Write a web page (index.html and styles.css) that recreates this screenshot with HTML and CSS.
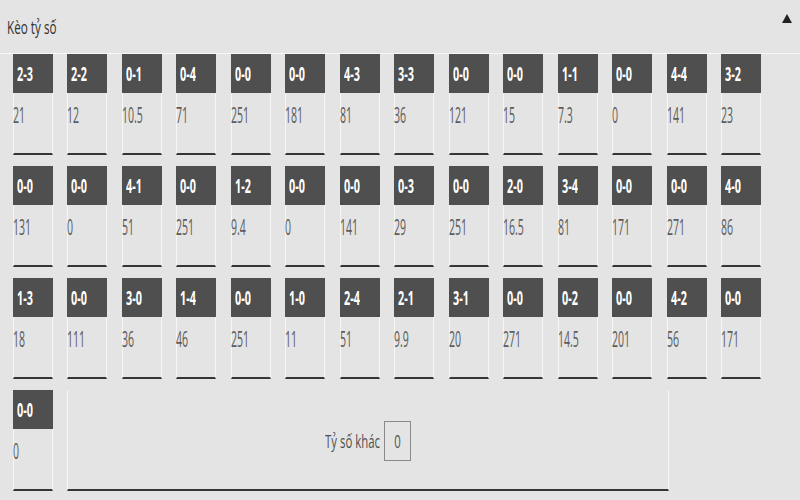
FILE: index.html
```html
<!DOCTYPE html>
<html lang="vi">
<head>
<meta charset="utf-8">
<title>Kèo tỷ số</title>
<link rel="stylesheet" href="styles.css">
</head>
<body>
<section class="panel">
  <header class="panel-header">
    <h2 class="panel-title"><span class="squeeze">Kèo tỷ số</span></h2>
    <span class="toggle" aria-label="Thu gọn"></span>
  </header>
  <div class="grid">
    <div class="cell"><div class="score"><span class="squeeze">2-3</span></div><div class="odd"><span class="squeeze">21</span></div></div>
    <div class="cell"><div class="score"><span class="squeeze">2-2</span></div><div class="odd"><span class="squeeze">12</span></div></div>
    <div class="cell"><div class="score"><span class="squeeze">0-1</span></div><div class="odd"><span class="squeeze">10.5</span></div></div>
    <div class="cell"><div class="score"><span class="squeeze">0-4</span></div><div class="odd"><span class="squeeze">71</span></div></div>
    <div class="cell"><div class="score"><span class="squeeze">0-0</span></div><div class="odd"><span class="squeeze">251</span></div></div>
    <div class="cell"><div class="score"><span class="squeeze">0-0</span></div><div class="odd"><span class="squeeze">181</span></div></div>
    <div class="cell"><div class="score"><span class="squeeze">4-3</span></div><div class="odd"><span class="squeeze">81</span></div></div>
    <div class="cell"><div class="score"><span class="squeeze">3-3</span></div><div class="odd"><span class="squeeze">36</span></div></div>
    <div class="cell"><div class="score"><span class="squeeze">0-0</span></div><div class="odd"><span class="squeeze">121</span></div></div>
    <div class="cell"><div class="score"><span class="squeeze">0-0</span></div><div class="odd"><span class="squeeze">15</span></div></div>
    <div class="cell"><div class="score"><span class="squeeze">1-1</span></div><div class="odd"><span class="squeeze">7.3</span></div></div>
    <div class="cell"><div class="score"><span class="squeeze">0-0</span></div><div class="odd"><span class="squeeze">0</span></div></div>
    <div class="cell"><div class="score"><span class="squeeze">4-4</span></div><div class="odd"><span class="squeeze">141</span></div></div>
    <div class="cell"><div class="score"><span class="squeeze">3-2</span></div><div class="odd"><span class="squeeze">23</span></div></div>

    <div class="cell"><div class="score"><span class="squeeze">0-0</span></div><div class="odd"><span class="squeeze">131</span></div></div>
    <div class="cell"><div class="score"><span class="squeeze">0-0</span></div><div class="odd"><span class="squeeze">0</span></div></div>
    <div class="cell"><div class="score"><span class="squeeze">4-1</span></div><div class="odd"><span class="squeeze">51</span></div></div>
    <div class="cell"><div class="score"><span class="squeeze">0-0</span></div><div class="odd"><span class="squeeze">251</span></div></div>
    <div class="cell"><div class="score"><span class="squeeze">1-2</span></div><div class="odd"><span class="squeeze">9.4</span></div></div>
    <div class="cell"><div class="score"><span class="squeeze">0-0</span></div><div class="odd"><span class="squeeze">0</span></div></div>
    <div class="cell"><div class="score"><span class="squeeze">0-0</span></div><div class="odd"><span class="squeeze">141</span></div></div>
    <div class="cell"><div class="score"><span class="squeeze">0-3</span></div><div class="odd"><span class="squeeze">29</span></div></div>
    <div class="cell"><div class="score"><span class="squeeze">0-0</span></div><div class="odd"><span class="squeeze">251</span></div></div>
    <div class="cell"><div class="score"><span class="squeeze">2-0</span></div><div class="odd"><span class="squeeze">16.5</span></div></div>
    <div class="cell"><div class="score"><span class="squeeze">3-4</span></div><div class="odd"><span class="squeeze">81</span></div></div>
    <div class="cell"><div class="score"><span class="squeeze">0-0</span></div><div class="odd"><span class="squeeze">171</span></div></div>
    <div class="cell"><div class="score"><span class="squeeze">0-0</span></div><div class="odd"><span class="squeeze">271</span></div></div>
    <div class="cell"><div class="score"><span class="squeeze">4-0</span></div><div class="odd"><span class="squeeze">86</span></div></div>

    <div class="cell"><div class="score"><span class="squeeze">1-3</span></div><div class="odd"><span class="squeeze">18</span></div></div>
    <div class="cell"><div class="score"><span class="squeeze">0-0</span></div><div class="odd"><span class="squeeze">111</span></div></div>
    <div class="cell"><div class="score"><span class="squeeze">3-0</span></div><div class="odd"><span class="squeeze">36</span></div></div>
    <div class="cell"><div class="score"><span class="squeeze">1-4</span></div><div class="odd"><span class="squeeze">46</span></div></div>
    <div class="cell"><div class="score"><span class="squeeze">0-0</span></div><div class="odd"><span class="squeeze">251</span></div></div>
    <div class="cell"><div class="score"><span class="squeeze">1-0</span></div><div class="odd"><span class="squeeze">11</span></div></div>
    <div class="cell"><div class="score"><span class="squeeze">2-4</span></div><div class="odd"><span class="squeeze">51</span></div></div>
    <div class="cell"><div class="score"><span class="squeeze">2-1</span></div><div class="odd"><span class="squeeze">9.9</span></div></div>
    <div class="cell"><div class="score"><span class="squeeze">3-1</span></div><div class="odd"><span class="squeeze">20</span></div></div>
    <div class="cell"><div class="score"><span class="squeeze">0-0</span></div><div class="odd"><span class="squeeze">271</span></div></div>
    <div class="cell"><div class="score"><span class="squeeze">0-2</span></div><div class="odd"><span class="squeeze">14.5</span></div></div>
    <div class="cell"><div class="score"><span class="squeeze">0-0</span></div><div class="odd"><span class="squeeze">201</span></div></div>
    <div class="cell"><div class="score"><span class="squeeze">4-2</span></div><div class="odd"><span class="squeeze">56</span></div></div>
    <div class="cell"><div class="score"><span class="squeeze">0-0</span></div><div class="odd"><span class="squeeze">171</span></div></div>

    <div class="cell"><div class="score"><span class="squeeze">0-0</span></div><div class="odd"><span class="squeeze">0</span></div></div>
    <div class="other">
      <label class="other-label"><span class="squeeze">Tỷ số khác</span></label>
      <div class="other-box"><span class="squeeze">0</span></div>
    </div>
  </div>
</section>
</body>
</html>
```

FILE: styles.css
```css
html, body {
  margin: 0;
  padding: 0;
  background: #e4e4e4;
}

body {
  width: 800px;
  height: 500px;
  overflow: hidden;
  font-family: "Open Sans", "Noto Sans", sans-serif;
  color: #555;
}

.squeeze {
  display: inline-block;
  transform-origin: left center;
  white-space: nowrap;
}

.panel-header {
  height: 53px;
  border-bottom: 1px solid #f7f7f7;
  display: flex;
  justify-content: space-between;
  align-items: flex-start;
  padding: 0 8px 0 7px;
}

.panel-title {
  margin: 0;
  padding-top: 15px;
  font-size: 18px;
  font-weight: 400;
  line-height: 24px;
  color: #333;
}

.panel-title .squeeze {
  transform: scaleX(0.65);
}

.toggle {
  width: 0;
  height: 0;
  margin-top: 14px;
  border-left: 5.5px solid transparent;
  border-right: 5.5px solid transparent;
  border-bottom: 9px solid #222;
}

.grid {
  display: grid;
  grid-template-columns: repeat(14, 40px);
  grid-auto-rows: 101px;
  column-gap: 14.5px;
  row-gap: 11px;
  padding-left: 12.5px;
}

.cell {
  box-sizing: border-box;
  border-left: 1px solid #f6f6f6;
  border-right: 1px solid #f6f6f6;
  border-bottom: 2px solid #353535;
}

.score {
  margin: 0 -1px;
  height: 39px;
  background: #4f4f4f;
  color: #fff;
  font-size: 19px;
  font-weight: 700;
  line-height: 41px;
  padding-left: 4px;
}

.score .squeeze {
  transform: scaleX(0.57);
}

.odd {
  margin-left: -1px;
  padding-top: 6px;
  font-size: 22px;
  line-height: 30px;
  color: #5c5c5c;
}

.odd .squeeze {
  transform: scaleX(0.48);
}

.other {
  grid-column: 2 / span 12;
  width: 602px;
  box-sizing: border-box;
  border-left: 1px solid #f6f6f6;
  border-right: 1px solid #f6f6f6;
  border-bottom: 2px solid #353535;
  display: flex;
  align-items: center;
  justify-content: center;
  gap: 3px;
  padding-top: 2px;
}

.other-label {
  width: 56px;
  font-size: 19px;
  line-height: 24px;
  color: #505050;
}

.other-label .squeeze {
  transform: scaleX(0.6);
}

.other-box {
  box-sizing: border-box;
  width: 27px;
  height: 40px;
  border: 1px solid #8a8a8a;
  font-size: 19px;
  line-height: 38px;
  text-align: center;
  color: #505050;
}

.other-box .squeeze {
  transform: scaleX(0.6);
  transform-origin: center center;
}
```
